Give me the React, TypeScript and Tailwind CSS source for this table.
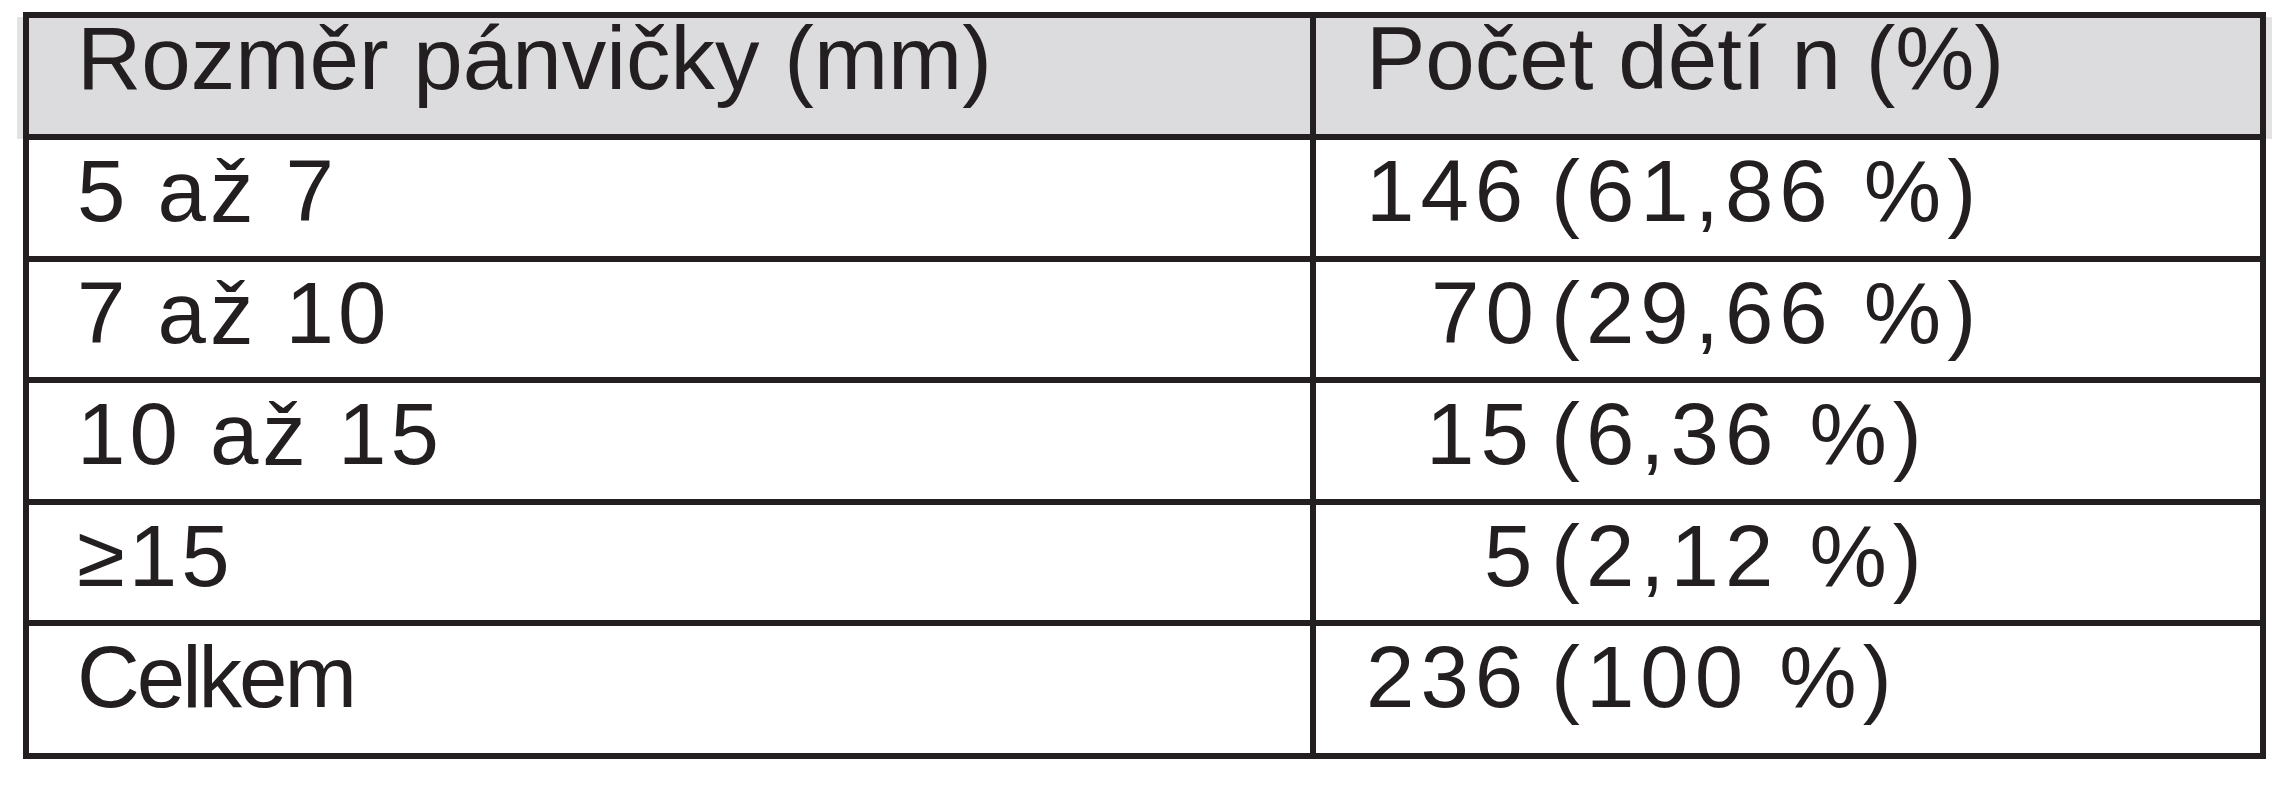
import React from "react";

const font = { fontFamily: '"Liberation Sans", Arial, sans-serif' };

type Row = { label: string; labelTrack: string; count: string; countPad: string; pct: string };

const rows: Row[] = [
  { label: "5 až 7", labelTrack: "tracking-[4px]", count: "146", countPad: "pl-[0px]", pct: "(61,86 %)" },
  { label: "7 až 10", labelTrack: "tracking-[4px]", count: "70", countPad: "pl-[65px]", pct: "(29,66 %)" },
  { label: "10 až 15", labelTrack: "tracking-[4px]", count: "15", countPad: "pl-[60px]", pct: "(6,36 %)" },
  { label: "≥15", labelTrack: "tracking-[4px]", count: "5", countPad: "pl-[118px]", pct: "(2,12 %)" },
  { label: "Celkem", labelTrack: "tracking-[-3px]", count: "236", countPad: "pl-[0px]", pct: "(100 %)" },
];

const heights = ["h-[122px]", "h-[121px]", "h-[122px]", "h-[121px]", "h-[127px]"];

export default function App() {
  return (
    <div className="w-[2284px] h-[800px] bg-white pt-[12px] pl-[17px] text-[#231f20]" style={font}>
      <div className="relative w-[2255px]">
        <div className="absolute left-0 right-0 top-[5px] h-[122px] bg-[#e3e3e4]" />
        <div className="relative ml-[6px] w-[2243px] border-[6px] border-[#231f20] bg-white">
          <div className="flex h-[122px] border-b-[6px] border-[#231f20] bg-[#dcdbdd]">
            <div className="w-[1287px] border-r-[6px] border-[#231f20] pl-[48px] pt-0 text-[89px] leading-[81px]">
              Rozměr pánvičky (mm)
            </div>
            <div className="flex-1 pl-[50px] pt-0 text-[89px] leading-[81px]">
              Počet dětí n (%)
            </div>
          </div>
          {rows.map((r, i) => (
            <div
              key={r.label}
              className={`flex ${heights[i]} ${i < rows.length - 1 ? "border-b-[6px] border-[#231f20]" : ""}`}
            >
              <div
                className={`w-[1287px] border-r-[6px] border-[#231f20] pl-[48px] pt-[7px] text-[87px] leading-none ${r.labelTrack}`}
              >
                {r.label}
              </div>
              <div className="flex-1 pl-[50px] pt-[7px] text-[87px] leading-none tracking-[6px] whitespace-nowrap">
                <span className={`inline-block w-[185px] ${r.countPad}`}>{r.count}</span>
                <span>{r.pct}</span>
              </div>
            </div>
          ))}
        </div>
      </div>
    </div>
  );
}
